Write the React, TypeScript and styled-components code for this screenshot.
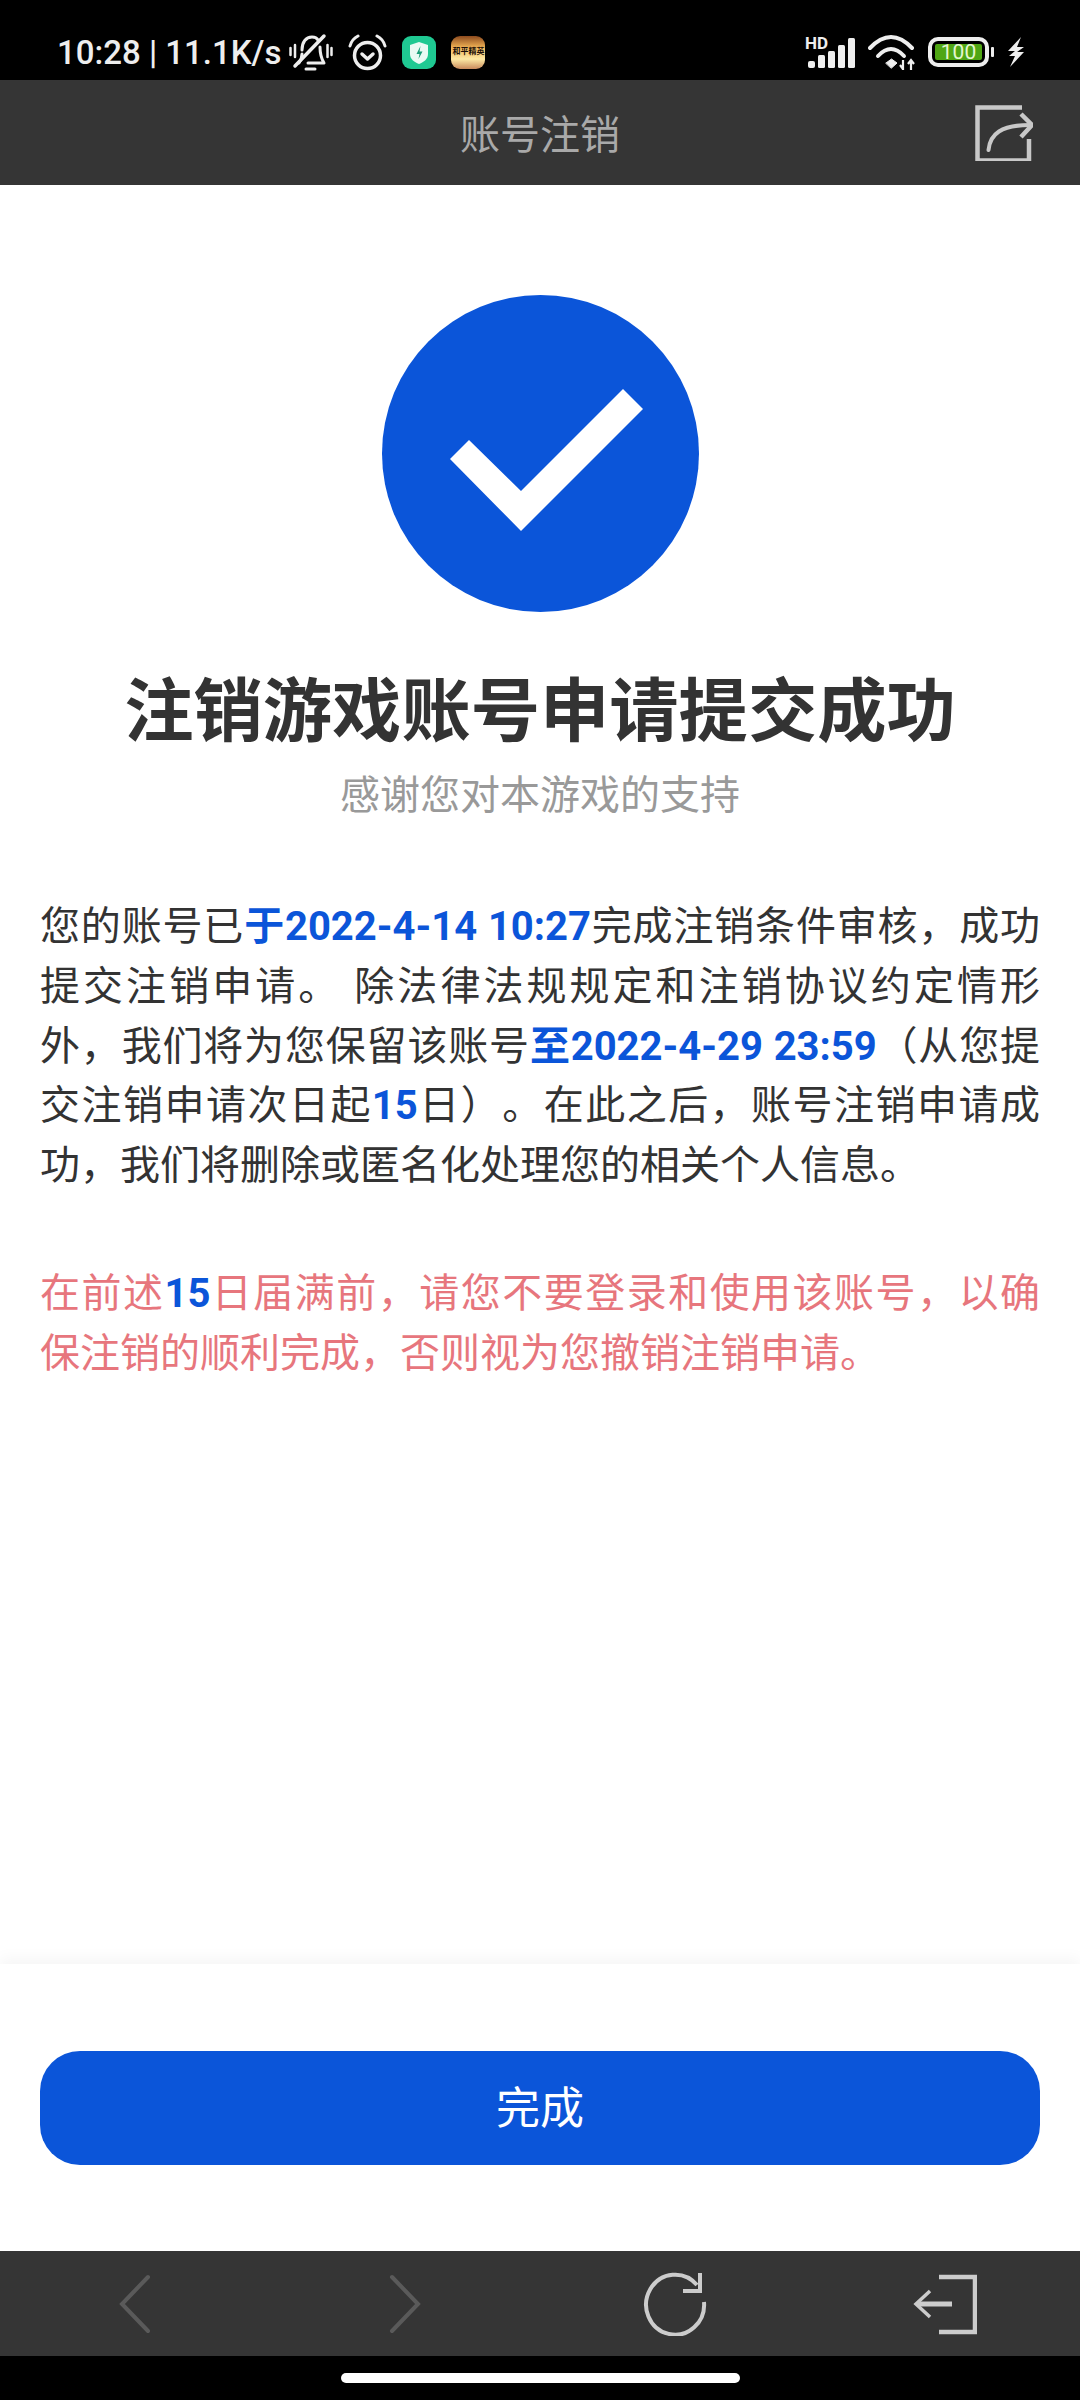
import React from 'react';
import styled, { createGlobalStyle } from 'styled-components';

const BLUE = '#0b55d9';

const GlobalStyle = createGlobalStyle`
    html, body {
        margin: 0;
        padding: 0;
        background: #fff;
    }
    body {
        font-family: Roboto, 'Noto Sans CJK SC', sans-serif;
        text-spacing-trim: space-all;
    }
`;

const Page = styled.div`
    width: 1080px;
    height: 2400px;
    display: flex;
    flex-direction: column;
    overflow: hidden;
`;

const StatusBar = styled.div`
    height: 80px;
    box-sizing: border-box;
    padding: 24px 55px 0 57px;
    background: #000;
    display: flex;
    align-items: center;
    justify-content: space-between;
`;

const StatusGroup = styled.div`
    display: flex;
    align-items: center;
    gap: ${(p: { $gap: number }) => p.$gap}px;
`;

const StatusText = styled.span`
    font-size: 33px;
    font-weight: 500;
    color: #eee;
    white-space: nowrap;
    margin-right: -7px;
`;

const GameIcon = styled.div`
    width: 34px;
    height: 33px;
    border-radius: 9px;
    background: linear-gradient(180deg, #8c4a1e 0%, #f0b255 35%, #fde9a4 70%, #c98a5c 100%);
    display: flex;
    align-items: center;
    justify-content: center;
    font-size: 8px;
    font-weight: 700;
    line-height: 10px;
    color: #1a0f08;
    white-space: nowrap;
`;

const Battery = styled.div`
    display: flex;
    align-items: center;
    gap: 2px;
`;

const BatteryShell = styled.div`
    width: 61px;
    height: 30px;
    box-sizing: border-box;
    border: 4px solid #eee;
    border-radius: 10px;
    padding: 3px;
    display: flex;
`;

const BatteryFill = styled.div`
    flex: 1;
    background: #4fa614;
    border-radius: 2px;
    color: #e4f7d0;
    font-size: 21px;
    line-height: 16px;
    text-align: center;
`;

const BatteryNub = styled.div`
    width: 3px;
    height: 10px;
    background: #eee;
    border-radius: 1px;
`;

const TitleBar = styled.header`
    height: 105px;
    box-sizing: border-box;
    padding-bottom: 2px;
    background: #353535;
    display: grid;
    grid-template-columns: 1fr auto 1fr;
    align-items: center;
`;

const BarTitle = styled.h1`
    grid-column: 2;
    margin: 0;
    font-size: 40px;
    font-weight: 400;
    color: #a9a9a9;
`;

const ShareButton = styled.div`
    grid-column: 3;
    justify-self: end;
    display: flex;
    margin: 2px 47px 0 0;
`;

const Content = styled.main`
    flex: 1;
    padding: 110px 40px 0;
    display: flex;
    flex-direction: column;
`;

const SuccessBadge = styled.svg`
    width: 317px;
    height: 317px;
    align-self: center;
    flex: none;
`;

const Heading = styled.h2`
    margin: 61px 0 0;
    font-size: 69.3px;
    line-height: 80px;
    font-weight: 700;
    color: #333;
    text-align: center;
`;

const SubHeading = styled.p`
    margin: 18px 0 0;
    font-size: 40px;
    line-height: 50px;
    color: #999;
    text-align: center;
`;

const Paragraph = styled.p<{ $warn?: boolean }>`
    margin: ${(p) => (p.$warn ? '68px' : '76px')} 0 0;
    font-size: 40px;
    line-height: 59.8px;
    color: ${(p) => (p.$warn ? '#e7767d' : '#333')};
    text-align: justify;
`;

const Strong = styled.b`
    font-weight: 700;
    color: ${BLUE};
`;

const Footer = styled.div`
    height: 287px;
    box-sizing: border-box;
    padding: 87px 40px 0;
    background: #fff;
    box-shadow: 0 -6px 14px rgba(0, 0, 0, 0.04);
`;

const DoneButton = styled.button`
    display: block;
    width: 100%;
    height: 114px;
    border: 0;
    border-radius: 40px;
    background: ${BLUE};
    color: #fff;
    font-family: inherit;
    font-size: 44px;
    padding: 0 0 7px;
`;

const NavBar = styled.nav`
    height: 105px;
    background: #353535;
    display: grid;
    grid-template-columns: repeat(4, 270px);
`;

const NavItem = styled.div`
    display: flex;
    align-items: center;
    justify-content: center;
`;

const HomeArea = styled.div`
    height: 44px;
    box-sizing: border-box;
    padding-top: 17px;
    background: #000;
    display: flex;
    justify-content: center;
`;

const HomeIndicator = styled.div`
    width: 399px;
    height: 10px;
    border-radius: 5px;
    background: #fff;
`;

function MuteBell() {
    return (
        <svg width="44" height="39" viewBox="0 0 44 39" fill="none" stroke="#eee" strokeWidth="3" strokeLinecap="round" strokeLinejoin="round">
            <path d="M13 17c0-8 4-13 10-13 3 0 5 1 6 3" />
            <path d="M31 14c0 7 1 11 4 16H19" />
            <path d="M10 30c2-3 3-6 3-9" />
            <path d="M35 3 6 33" strokeWidth="3.5" />
            <path d="M17 36h9" />
            <path d="M1.5 15v7M6 12v12M38.500 12v12M42.500 15v7" strokeWidth="2.500" />
        </svg>
    );
}

function AlarmClock() {
    return (
        <svg width="39" height="37" viewBox="0 0 39 37" fill="none" stroke="#eee" strokeWidth="3.500" strokeLinecap="round" strokeLinejoin="round">
            <circle cx="19.500" cy="21.500" r="13" />
            <path d="M2 12c1-4 4-8 8-10M29 2c4 2 7 6 8 10" strokeWidth="3" />
            <path d="M14 20l5.500 5 5.500-5" />
        </svg>
    );
}

function GuardIcon() {
    return (
        <svg width="34" height="33" viewBox="0 0 34 33">
            <rect width="34" height="33" rx="9" fill="#1fc992" />
            <path d="M17 6l9 3v9c0 5-4 8-9 10-5-2-9-5-9-10V9z" fill="#eafaf4" />
            <path d="M18.500 10l-4 8h3l-1 5 4-7.500h-3z" fill="#1a9e78" />
        </svg>
    );
}

function Signal() {
    return (
        <svg width="50" height="32" viewBox="0 0 50 32">
            <text x="0" y="13" fontFamily="Roboto, sans-serif" fontSize="17" fontWeight="700" fill="#eee">HD</text>
            <rect x="3" y="25" width="7" height="7" rx="2" fill="#eee" />
            <rect x="13" y="19" width="7" height="13" rx="1.500" fill="#eee" />
            <rect x="23" y="15" width="7" height="17" rx="1.500" fill="#eee" />
            <rect x="33" y="9" width="7" height="23" rx="1.500" fill="#eee" />
            <rect x="43" y="2" width="7" height="30" rx="1.500" fill="#eee" />
        </svg>
    );
}

function Wifi() {
    return (
        <svg width="47" height="35" viewBox="0 0 47 35" fill="none" stroke="#eee" strokeWidth="4" strokeLinecap="round">
            <path d="M2 13Q23 -9 44 13" />
            <path d="M10 21Q23 7 36 21" />
            <path d="M18 28l5.500-4 5.500 4-5.500 5z" fill="#eee" strokeWidth="1" strokeLinejoin="round" />
            <path d="M35 25v10M32 30l3 4M43 35V25M40 29l3-4 3 4" strokeWidth="2.200" strokeLinecap="butt" />
        </svg>
    );
}

function Bolt() {
    return (
        <svg width="18" height="30" viewBox="0 0 18 30">
            <path d="M14 0 1 14h7l-6 5h6L3 30l14-15h-7l7-5h-7z" fill="#eee" />
        </svg>
    );
}

function ShareIcon() {
    return (
        <svg width="58" height="56" viewBox="0 0 58 56" fill="none" stroke="#c8c8c8">
            <path d="M47 2.500H2.500v53H54V34" strokeWidth="4.500" />
            <path d="M13.500 45C15 29 26 20 55 20" strokeWidth="4" strokeLinecap="round" />
            <path d="M46 9l11 11-11 12" strokeWidth="4.500" />
        </svg>
    );
}

function CheckBadge() {
    return (
        <SuccessBadge viewBox="0 0 317 317">
            <circle cx="158.500" cy="158.500" r="158.500" fill={BLUE} />
            <polygon points="68,164 87,145 139,196 241,94 261,114 139,236" fill="#fff" />
        </SuccessBadge>
    );
}

function BackIcon() {
    return (
        <svg width="40" height="60" viewBox="0 0 40 60" fill="none" stroke="#5a5a5a" strokeWidth="4">
            <path d="M33 3 7 30l26 27" strokeLinecap="round" />
        </svg>
    );
}

function ForwardIcon() {
    return (
        <svg width="40" height="60" viewBox="0 0 40 60" fill="none" stroke="#5a5a5a" strokeWidth="4">
            <path d="M7 3l26 27L7 57" strokeLinecap="round" />
        </svg>
    );
}

function RefreshIcon() {
    return (
        <svg width="64" height="64" viewBox="0 0 64 64" fill="none" stroke="#ccc" strokeWidth="4">
            <path d="M61 30A29 30 0 1 1 54 13" />
            <path d="M57 1v18H40" />
        </svg>
    );
}

function ExitIcon() {
    return (
        <svg width="64" height="64" viewBox="0 0 64 64" fill="none" stroke="#ccc" strokeWidth="4">
            <path d="M26 5h36v55H26" strokeWidth="4.500" />
            <path d="M39 32H4" strokeWidth="5" />
            <path d="M17 19 3 32l14 13" strokeWidth="3.500" />
        </svg>
    );
}

export default function App() {
    return (
        <Page>
            <GlobalStyle />
            <StatusBar>
                <StatusGroup $gap={15}>
                    <StatusText>10:28 | 11.1K/s</StatusText>
                    <MuteBell />
                    <AlarmClock />
                    <GuardIcon />
                    <GameIcon>和平精英</GameIcon>
                </StatusGroup>
                <StatusGroup $gap={13}>
                    <Signal />
                    <Wifi />
                    <Battery>
                        <BatteryShell>
                            <BatteryFill>100</BatteryFill>
                        </BatteryShell>
                        <BatteryNub />
                    </Battery>
                    <Bolt />
                </StatusGroup>
            </StatusBar>
            <TitleBar>
                <BarTitle>账号注销</BarTitle>
                <ShareButton>
                    <ShareIcon />
                </ShareButton>
            </TitleBar>
            <Content>
                <CheckBadge />
                <Heading>注销游戏账号申请提交成功</Heading>
                <SubHeading>感谢您对本游戏的支持</SubHeading>
                <Paragraph>
                    您的账号已<Strong>于2022-4-14 10:27</Strong>完成注销条件审核，成功提交注销申请。 除法律法规规定和注销协议约定情形外，我们将为您保留该账号<Strong>至2022-4-29 23:59</Strong>（从您提交注销申请次日起<Strong>15</Strong>日）。在此之后，账号注销申请成功，我们将删除或匿名化处理您的相关个人信息。
                </Paragraph>
                <Paragraph $warn>
                    在前述<Strong>15</Strong>日届满前，请您不要登录和使用该账号，以确保注销的顺利完成，否则视为您撤销注销申请。
                </Paragraph>
            </Content>
            <Footer>
                <DoneButton>完成</DoneButton>
            </Footer>
            <NavBar>
                <NavItem><BackIcon /></NavItem>
                <NavItem><ForwardIcon /></NavItem>
                <NavItem><RefreshIcon /></NavItem>
                <NavItem><ExitIcon /></NavItem>
            </NavBar>
            <HomeArea>
                <HomeIndicator />
            </HomeArea>
        </Page>
    );
}
